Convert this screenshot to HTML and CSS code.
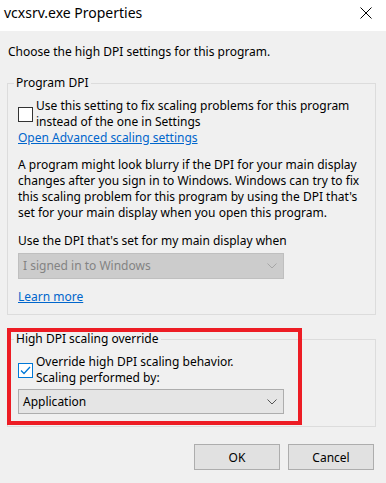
FILE: index.html
```html
<!DOCTYPE html>
<html lang="en">
  <head>
    <meta charset="UTF-8" />
    <meta name="viewport" content="width=device-width, initial-scale=1.0" />
    <title>vcxsrv.exe Properties</title>
    <link rel="stylesheet" href="styles.css">
  </head>
  <body>
    <div class="titlebar">
      <span class="title">vcxsrv.exe Properties</span>
      <svg class="close" width="12" height="12" viewBox="0 0 12 12">
        <path d="M0.5 0.5 L11.5 11.5 M11.5 0.5 L0.5 11.5" stroke="#000" stroke-width="1" fill="none" />
      </svg>
    </div>

    <div class="content">
      <p class="intro">Choose the high DPI settings for this program.</p>

      <fieldset class="group group-program">
        <legend>Program DPI</legend>
        <div class="check-row">
          <span class="checkbox"></span>
          <span class="check-label">Use this setting to fix scaling problems for this program<br />instead of the one in Settings</span>
        </div>
        <a class="link" href="#">Open Advanced scaling settings</a>

        <p class="explain">
          A program might look blurry if the DPI for your main display<br />
          changes after you sign in to Windows. Windows can try to fix<br />
          this scaling problem for this program by using the DPI that's<br />
          set for your main display when you open this program.
        </p>

        <p class="when">Use the DPI that's set for my main display when</p>
        <div class="dropdown disabled">
          <span>I signed in to Windows</span>
          <svg width="10" height="6" viewBox="0 0 10 6">
            <path d="M0.5 0.5 L5 5 L9.5 0.5" stroke="#a6a6a6" fill="none" />
          </svg>
        </div>

        <a class="link learn" href="#">Learn more</a>
      </fieldset>

      <div class="override-wrap">
        <fieldset class="group group-override">
          <legend>High DPI scaling override</legend>
          <div class="check-row">
            <span class="checkbox checked">
              <svg width="13" height="13" viewBox="0 0 13 13">
                <path d="M2 6.5 L5 9.5 L11 3" stroke="#0078d7" stroke-width="1.3" fill="none" />
              </svg>
            </span>
            <span class="check-label">Override high DPI scaling behavior.<br />Scaling performed by:</span>
          </div>
          <div class="dropdown">
            <span>Application</span>
            <svg width="10" height="6" viewBox="0 0 10 6">
              <path d="M0.5 0.5 L5 5 L9.5 0.5" stroke="#555" fill="none" />
            </svg>
          </div>
        </fieldset>
        <div class="highlight"></div>
      </div>

      <div class="buttons">
        <button>OK</button>
        <button>Cancel</button>
      </div>
    </div>
  </body>
</html>
```

FILE: styles.css
```css
body {
  margin: 0;
  width: 386px;
  height: 483px;
  overflow: hidden;
  background-color: #f0f0f0;
  font-family: "Segoe UI", "Noto Sans", Arial, sans-serif;
  font-size: 12px;
  line-height: 16px;
  color: #000;
}
.titlebar {
  height: 31px;
  background-color: #fff;
  display: flex;
  align-items: center;
  justify-content: space-between;
  padding: 0 14px 0 4px;
}
.title {
  font-size: 14px;
  margin-top: -5px;
}
.close {
  margin-top: -6px;
}
.content {
  padding: 13px 10px 0 7px;
}
.intro {
  margin: 0 0 15px 1px;
  white-space: nowrap;
}
.group {
  margin: 0;
  border: 1px solid #dcdcdc;
  padding: 0 9px 9px 10px;
  min-width: 0;
}
.group legend {
  padding: 0 2px;
  margin-left: -4px;
  line-height: 16px;
}
.check-row {
  display: flex;
  align-items: center;
  gap: 3px;
  margin-top: 7px;
  white-space: nowrap;
}
.checkbox {
  flex: none;
  width: 15px;
  height: 15px;
  box-sizing: border-box;
  border: 1px solid #333;
  background-color: #fff;
  display: flex;
  align-items: center;
  justify-content: center;
}
.checkbox.checked {
  border-color: #0078d7;
}
.link {
  display: inline-block;
  color: #0066cc;
  text-decoration: underline;
}
.explain {
  margin: 11px 0 0 0;
  white-space: nowrap;
}
.when {
  margin: 12px 0 4px 0;
}
.dropdown {
  width: 266px;
  height: 26px;
  box-sizing: border-box;
  border: 1px solid #adadad;
  background-color: #e5e5e5;
  display: flex;
  align-items: center;
  justify-content: space-between;
  padding: 0 6px 0 4px;
}
.dropdown.disabled {
  background-color: #cccccc;
  border-color: #bfbfbf;
  color: #838383;
}
.learn {
  margin-top: 10px;
}
.override-wrap {
  position: relative;
  margin-top: 16px;
}
.group-override {
  padding-bottom: 12px;
}
.group-override .check-row {
  margin-top: 7px;
}
.group-override .dropdown {
  height: 25px;
  margin-top: 3px;
}
.highlight {
  position: absolute;
  left: 0;
  top: -3px;
  width: 295px;
  height: 97px;
  box-sizing: border-box;
  border: 4px solid #ed1c24;
  pointer-events: none;
}
.buttons {
  display: flex;
  justify-content: flex-end;
  gap: 8px;
  margin-top: 17px;
  padding-right: 2px;
}
.buttons button {
  width: 86px;
  height: 26px;
  font-family: inherit;
  font-size: 12px;
  background-color: #e1e1e1;
  border: 1px solid #adadad;
  padding: 0;
  color: #000;
}
```
